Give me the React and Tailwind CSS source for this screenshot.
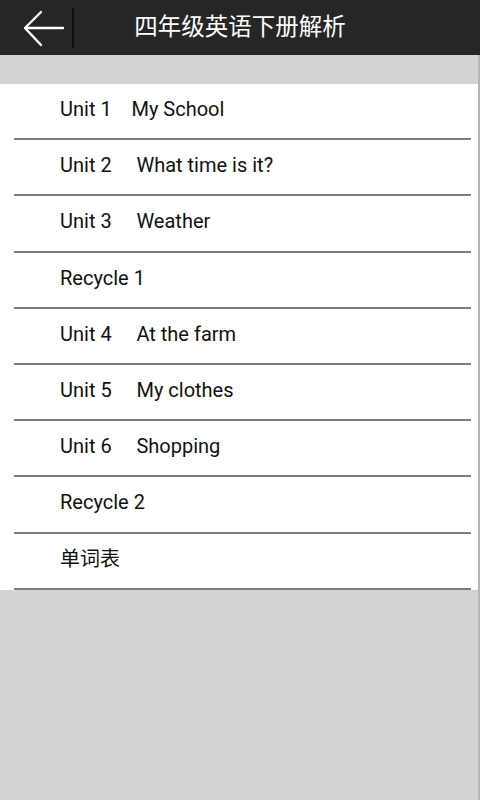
import React from 'react';

const items = [
    'Unit 1    My School',
    'Unit 2     What time is it?',
    'Unit 3     Weather',
    'Recycle 1',
    'Unit 4     At the farm',
    'Unit 5     My clothes',
    'Unit 6     Shopping',
    'Recycle 2',
    '单词表',
];

const font = { fontFamily: 'Roboto, "Noto Sans CJK SC", sans-serif' };

const App = () => {
    return (
        <div className="w-[480px] h-[800px] flex flex-col bg-[#d3d3d3]" style={font}>
            {/* top bar */}
            <div className="h-[55px] bg-[#262626] flex items-center relative shrink-0">
                <svg width="72" height="55" viewBox="0 0 72 55" className="shrink-0">
                    <path d="M63 28H25M41 12L25 28L41 45" stroke="white" strokeWidth="2.4" fill="none" strokeLinecap="round" strokeLinejoin="round" />
                </svg>
                <div className="w-[2px] h-[40px] bg-[#0d0d0d]" />
                <h1 className="absolute inset-0 flex items-center justify-center text-white text-[23.5px] pointer-events-none">
                    四年级英语下册解析
                </h1>
            </div>

            <div className="flex-1 flex flex-col border-r-2 border-[#b5b5b5]">
                <div className="h-[29px] shrink-0" />
                <ul className="bg-white">
                    {items.map((item) => (
                        <li key={item} className="h-[56.2px] flex flex-col">
                            <div className="flex-1 flex items-center pl-[60px] pb-[4px] text-[20px] text-[#111] whitespace-pre">
                                {item}
                            </div>
                            <div className="h-[2px] ml-[14px] mr-[7px] bg-[#7d7d7d]" />
                        </li>
                    ))}
                </ul>
            </div>
        </div>
    );
};

export default App;
